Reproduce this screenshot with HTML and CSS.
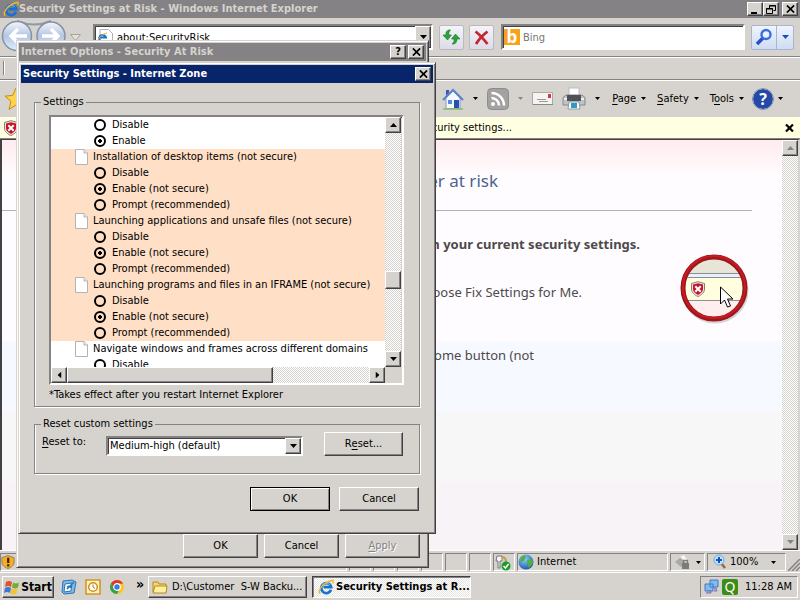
FILE: index.html
```html
<!DOCTYPE html>
<html lang="en">
<head>
<meta charset="utf-8">
<title>Security Settings at Risk - Windows Internet Explorer</title>
<link rel="stylesheet" href="styles.css">
</head>
<body>
<svg class="defs" aria-hidden="true">
  <defs>
    <linearGradient id="orb" x1="0" y1="0" x2="0" y2="1"><stop offset="0" stop-color="#f4f7fc"/><stop offset=".5" stop-color="#b4c5e2"/><stop offset="1" stop-color="#dff1fb"/></linearGradient>
    <radialGradient id="globe" cx=".4" cy=".3" r=".8"><stop offset="0" stop-color="#8fd4ff"/><stop offset="1" stop-color="#0b4aa5"/></radialGradient>
    <symbol id="ie" viewBox="0 0 16 16">
      <path d="M13 10.800A5 5 0 1 1 13.200 8.200H5.500" fill="none" stroke="#1673cf" stroke-width="2.700"/>
      <path d="M4 7a4.600 4.600 0 0 1 8-1" fill="none" stroke="#6ec3f7" stroke-width="1"/>
      <path d="M2.200 14.600C-1 12 5 3.200 14.500 1.200c1.200.3.900 2 .1 3.300" fill="none" stroke="#f2b52a" stroke-width="1.400"/>
    </symbol>
    <symbol id="shield" viewBox="0 0 16 16">
      <path d="M8 .7 14.500 2.500V8c0 3.500-3 6-6.500 7.500C4.500 14 1.500 11.500 1.500 8V2.500z" fill="#f6e9e9" stroke="#877" stroke-width="1"/>
      <path d="M8 2.300 13 3.600V8c0 2.700-2.200 4.700-5 5.900C5.200 12.700 3 10.700 3 8V3.600z" fill="#c41627"/>
      <path d="m5.300 5.200 5.400 5.600m0-5.600-5.400 5.600" stroke="#fff" stroke-width="2"/>
    </symbol>
    <symbol id="down" viewBox="0 0 7 4"><path d="M0 0h7L3.500 4z" fill="currentColor"/></symbol>
    <symbol id="cross" viewBox="0 0 8 7"><path d="m.8.300 6.400 6.400M7.200.3.800 6.700" stroke="currentColor" stroke-width="1.500" fill="none"/></symbol>
    <symbol id="page" viewBox="0 0 13 16"><path d="M.5.500h8.500l3.500 3.500v11.500H.5z" fill="#fff" stroke="#b5b2b5"/><path d="M9 .5V4h3.500" fill="#eee" stroke="#b5b2b5"/></symbol>
  </defs>
</svg>

<main class="browser">
  <header class="titlebar">
    <svg class="i16"><use href="#ie"/></svg>
    <span class="caption">Security Settings at Risk - Windows Internet Explorer</span>
    <div class="pair">
      <button class="cap" aria-label="Minimize"><svg width="10" height="9"><path d="M1 7h6v2H1z"/></svg></button>
      <button class="cap" aria-label="Restore"><svg width="10" height="9"><path d="M3.500 3V.5h6v5H7.500M3 1h7M.5 3.500h6v5h-6zM0 4h7" fill="none" stroke="#000"/></svg></button>
    </div>
    <button class="cap" aria-label="Close"><svg width="9" height="8"><use href="#cross"/></svg></button>
  </header>

  <nav class="navbar">
    <svg class="orbs" width="84" height="36" viewBox="0 0 84 36">
      <path d="M17 2Q34 9 51 2" stroke="#8d98a8" stroke-width="2" fill="none"/>
      <circle cx="17" cy="17" r="14.500" fill="url(#orb)" stroke="#8592a5" stroke-width="1.500"/>
      <circle cx="51" cy="17" r="14" fill="url(#orb)" stroke="#8592a5" stroke-width="1.500"/>
      <path d="M27 17H11m7-7-7 7 7 7M42 17h16m-7-7 7 7-7 7" stroke="#fff" stroke-width="3.500" fill="none"/>
      <path d="M70.500 15.500h10l-5 6z" fill="#e2e0dc" stroke="#a7a5a2"/>
    </svg>
    <div class="address sunken">
      <svg class="i16 pageie" viewBox="0 0 16 16"><path d="M3 .5h8.500l4 4v11H3z" fill="#fff" stroke="#a9b3bd"/><path d="M8.500 11.500A3.500 3.500 0 1 1 9 8.500H3" stroke="#1673cf" stroke-width="2" fill="none"/><path d="M1 13C0 10 5 5 10 4" stroke="#f2b52a" fill="none"/></svg>
      <input aria-label="Address" value="about:SecurityRisk">
      <button class="face drop" aria-label="Show addresses"><svg width="7" height="4"><use href="#down"/></svg></button>
    </div>
    <button class="soft" aria-label="Refresh"><svg width="19" height="18" viewBox="0 0 19 18"><path d="M8.500 2C5 1.500 3.500 4 4 7H1l4.500 5L9.500 7H7C6.500 5 7 3.500 8.500 2z" fill="#2ba336" stroke="#18772a" stroke-width=".6"/><path d="M10 16c3.500.5 5-2 5-5h3l-4.500-5L9.500 11H12c.5 2-.5 4-2 5z" fill="#2ba336" stroke="#18772a" stroke-width=".6"/></svg></button>
    <button class="soft" aria-label="Stop"><svg width="15" height="15" viewBox="0 0 15 15"><path d="M1.500 1.500c4 3 8 7.500 12 12.500M13.500 1.500C9 5 5 9 2 14" stroke="#c3272e" stroke-width="2.800" fill="none"/></svg></button>
    <div class="search sunken">
      <span class="bing">b</span>
      <input aria-label="Search" placeholder="Bing">
    </div>
    <div class="split">
      <button aria-label="Search"><svg width="18" height="18" viewBox="0 0 18 18"><path d="m8 10-6 6" stroke="#2450c8" stroke-width="3.500"/><circle cx="11" cy="6.500" r="4.500" fill="#e9f2ff" stroke="#3a6de0" stroke-width="2.400"/></svg></button>
      <button class="blue" aria-label="Search options"><svg width="7" height="4"><use href="#down"/></svg></button>
    </div>
  </nav>

  <div class="linkbar"><span class="grip"></span></div>

  <div class="cmdbar">
    <svg class="star" width="24" height="24" viewBox="0 0 24 24"><path d="m12 1 3.200 7.400 7.800.7-6 5.300 2 8L12 18l-7 4.400 2-8-6-5.300 7.800-.7z" fill="#ffd34d" stroke="#c98a17"/></svg>
    <div class="tools">
      <button aria-label="Home"><svg width="22" height="22" viewBox="0 0 22 22"><path d="M4 2h3v7H4z" fill="#3c56c7"/><path d="M4 10v10.500h14V10l-7-8z" fill="#f5f8ff" stroke="#7d9bca"/><path d="M1 12 11 2l10 10" stroke="#5b84c4" stroke-width="2.200" fill="none"/><path d="M12 12h5v8h-5z" fill="#2a4fae"/><path d="M6 12h4v4H6z" fill="#5c8bd8"/><path d="M1 21h20" stroke="#8cbb64" stroke-width="1.500"/></svg></button>
      <button class="arr" aria-label="Home options"><svg width="5" height="3"><use href="#down"/></svg></button>
      <button aria-label="Feeds"><svg width="22" height="22" viewBox="0 0 22 22"><rect x=".5" y=".5" width="21" height="21" rx="4" fill="#a3a1a1" stroke="#8e8c8c"/><circle cx="6" cy="16" r="2" fill="#fff"/><path d="M4.500 10a7.500 7.500 0 0 1 7.500 7.500M4.500 5A12.500 12.500 0 0 1 17 17.500" stroke="#fff" stroke-width="2.400" fill="none"/></svg></button>
      <button class="arr dim" aria-label="Feed options"><svg width="5" height="3"><use href="#down"/></svg></button>
      <button aria-label="Read mail"><svg width="22" height="16" viewBox="0 0 22 16"><path d="M.5 1.500h20v12H.5z" fill="#f5f4f2" stroke="#aaa8a5"/><path d="M1 13.500h20" stroke="#8a8886"/><path d="M16 3h3v4h-3z" fill="#cf3745"/><path d="M5 8.500h9M7 10.500h9" stroke="#9a9896"/></svg></button>
      <button aria-label="Print"><svg width="24" height="24" viewBox="0 0 24 24"><path d="M7 1h10v9H7z" fill="#fff" stroke="#bbb"/><path d="M1 10.500 4 8h16l3 2.500V18H1z" fill="#bfc2c7" stroke="#85888d"/><path d="M5 8h14v6H5z" fill="#4d5259"/><path d="M2 11h3v2H2zM19 11h3v2h-3z" fill="#eee"/><path d="M7 15h10l1 7H6z" fill="#fff" stroke="#999"/><path d="M9 16h6v5H9z" fill="#2b9bc2"/></svg></button>
      <button class="arr" aria-label="Print options"><svg width="5" height="3"><use href="#down"/></svg></button>
      <button class="menu"><span><u>P</u>age</span><svg width="5" height="3"><use href="#down"/></svg></button>
      <button class="menu"><span><u>S</u>afety</span><svg width="5" height="3"><use href="#down"/></svg></button>
      <button class="menu"><span>T<u>o</u>ols</span><svg width="5" height="3"><use href="#down"/></svg></button>
      <button class="help" aria-label="Help"><span class="qmark">?</span><svg width="5" height="3"><use href="#down"/></svg></button>
    </div>
  </div>

  <div class="infobar">
    <svg class="i16"><use href="#shield"/></svg>
    <a href="#" class="infotext">your security settings...</a>
    <button aria-label="Dismiss"><svg width="9" height="8" viewBox="0 0 9 8"><path d="m1 .5 7 7m0-7-7 7" stroke="#000" stroke-width="2.200"/></svg></button>
  </div>

  <section class="viewport">
    <article class="doc">
      <h1>computer at risk</h1>
      <hr>
      <div class="advice">
        <div class="lines">
          <p class="strong">on your current security settings.</p>
          <p class="fix">choose Fix Settings for Me.</p>
        </div>
        <svg class="lens" width="70" height="72" viewBox="0 0 70 72">
          <defs><clipPath id="round"><circle cx="35" cy="35" r="30"/></clipPath></defs>
          <circle cx="36" cy="37" r="32" fill="none" stroke="#bbb" stroke-width="3" opacity=".6"/>
          <g clip-path="url(#round)">
            <path d="M0 0h70v21H0z" fill="#e8e4d8"/><path d="M0 21h70v4H0z" fill="#e8f0fa"/><path d="M0 25h70v22H0z" fill="#ffffdf"/><path d="M0 47h70v25H0z" fill="#ffeeee"/>
            <path d="M0 20.500h70M0 24.500h70M0 47.500h70" stroke="#8b8e94"/>
          </g>
          <circle cx="35" cy="35" r="31" fill="none" stroke="#9d171c" stroke-width="5"/>
          <circle cx="35" cy="34" r="31" fill="none" stroke="#c41c22" stroke-width="2"/>
          <use href="#shield" x="11" y="28" width="16" height="16"/>
          <path d="M41.500 34v17l4-4 3 7 3-1-3-7h5.500z" fill="#fff" stroke="#000"/>
        </svg>
      </div>
      <p class="home">Home button (not</p>
    </article>
    <div class="vscroll pagescroll">
      <button class="face up" disabled aria-label="Scroll up"><svg width="7" height="4"><use href="#down"/></svg></button>
      <button class="face" disabled aria-label="Scroll down"><svg width="7" height="4"><use href="#down"/></svg></button>
    </div>
  </section>

  <footer class="status">
    <div class="cell grow"><svg width="14" height="16" viewBox="0 0 16 16"><path d="M8 .7 15 3v5c0 4-3 6-7 7.500C4 14 1 12 1 8V3z" fill="#f4ac24" stroke="#8a7a60"/><path d="M7 3h2.500v6H7zM7 10.500h2.500V13H7z" fill="#402000"/></svg></div>
    <div class="cell"></div><div class="cell"></div><div class="cell"></div><div class="cell"></div><div class="cell"></div><div class="cell"></div>
    <div class="cell"><svg width="17" height="17" viewBox="0 0 17 17"><path d="M3 2h5v5H6v7H4V7H2z" fill="#f5f5f5" stroke="#777"/><path d="M8 3q4 0 4 5" stroke="#c89845" stroke-width="2" fill="none"/><circle cx="12" cy="12" r="4.500" fill="#1c9a2b"/><path d="m9.500 12 2 2 3-4" stroke="#fff" stroke-width="1.500" fill="none"/></svg></div>
    <div class="cell zone"><svg width="16" height="16" viewBox="0 0 16 16"><circle cx="8" cy="8" r="7.500" fill="url(#globe)"/><path d="M3 3q4-3 5 0L6 7 2 8zM9 6l5-1 1 4-4 5-2-4z" fill="#52ae47"/></svg><span>Internet</span></div>
    <div class="cell prot"><svg width="16" height="16" viewBox="0 0 16 16"><path d="m1 8 6-5 6 5-6 5z" fill="#aaa"/><path d="m6 3 4-2 4 6-3 1z" fill="#f6f6f6"/><path d="M8 9h7v6H8z" fill="#7d7b79"/><path d="M9.500 9V6.500h4V9" stroke="#7d7b79" stroke-width="1.300" fill="none"/></svg><svg width="5" height="3"><use href="#down"/></svg></div>
    <div class="cell zoom"><svg width="14" height="16" viewBox="0 0 14 16"><path d="m8 9 4 5" stroke="#9c6843" stroke-width="2.500"/><circle cx="6" cy="6" r="5" fill="#bce0ff" stroke="#78a9d8"/><path d="M6 3v6M3 6h6" stroke="#1455b5" stroke-width="2"/></svg><span>100%</span><svg class="zarr" width="5" height="3"><use href="#down"/></svg></div>
    <svg class="sizer" width="12" height="12"><path d="M0 12 12 0M4 12l8-8M8 12l4-4" stroke="#848284" stroke-width="1.500"/></svg>
  </footer>
</main>

<footer class="taskbar">
  <button class="face start"><svg width="16" height="15" viewBox="0 0 16 15"><path d="M2 2q3-2 6 0L7 7Q4 5 1 7z" fill="#e5502a"/><path d="M9 2.500q3 2 6 0L14 7.500q-3 2-6 0z" fill="#6fae2e"/><path d="M1 8q3-2 6 0l-1 5q-3-2-6 0z" fill="#3b78d8"/><path d="M7.500 8.500q3 2 6 0l-1 5q-3 2-6 0z" fill="#f8c12c"/></svg><span>Start</span></button>
  <div class="quick">
    <button aria-label="Show Desktop"><svg width="16" height="16" viewBox="0 0 16 16"><path d="m2 2 9-1 4 2-2 11-10 1-2-2z" fill="#7fbbe8" stroke="#2b74b8"/><path d="m4 5 7-1-1 8-7 1z" fill="#fff" stroke="#2b74b8"/><path d="M6 10l7-7M6 8q3-2 4 1" stroke="#2b74b8" stroke-width="1.500" fill="none"/></svg></button>
    <button aria-label="Outlook"><svg width="16" height="16" viewBox="0 0 16 16"><path d="M1 1h14v14H1z" fill="#fff2c7" stroke="#d59622" stroke-width="1.600"/><circle cx="8" cy="8" r="4.300" fill="#fff" stroke="#cf8f1e" stroke-width="1.500"/><path d="M8 5.500V8l2 1.500" stroke="#b87612" fill="none"/></svg></button>
    <button aria-label="Chrome"><svg width="16" height="16" viewBox="0 0 16 16"><circle cx="8" cy="8" r="7" fill="#fbc813"/><path d="M1.900 4.500A7 7 0 0 1 14.100 4.600L8 5 5 9.500z" fill="#dd3b2a"/><path d="M1.900 4.500A7 7 0 0 0 8 15l3-5.500-6 0z" fill="#34a04a"/><circle cx="8" cy="8" r="3.300" fill="#3a7be0" stroke="#fff" stroke-width="1.200"/></svg></button>
  </div>
  <span class="more">»</span>
  <button class="face task"><svg width="16" height="14" viewBox="0 0 16 14"><path d="M1 12V2h5l1 2h7v8z" fill="#f6d669" stroke="#b48a1e"/><path d="m1 13 2-7h12l-1 7z" fill="#fff0a0" stroke="#b48a1e"/></svg><span>D:\Customer&nbsp; S-W Backu...</span></button>
  <button class="face task active"><svg class="i16"><use href="#ie"/></svg><span>Security Settings at R...</span></button>
  <div class="tray">
    <svg width="15" height="16" viewBox="0 0 15 16"><path d="M6 1h8v7H6zM1 5h8v7H1z" fill="#76c0f5" stroke="#5470b8"/><path d="M3 12h4v2H2M9 9h3l1 3h-3" fill="#aaa6d0" stroke="#7a7ab0"/></svg>
    <span class="q">Q</span>
    <time>11:28 AM</time>
  </div>
</footer>

<section class="window options" role="dialog" aria-label="Internet Options">
  <header class="titlebar">
    <span class="caption">Internet Options - Security At Risk</span>
    <button class="cap" aria-label="Help"><b>?</b></button>
    <button class="cap" aria-label="Close"><svg width="9" height="8"><use href="#cross"/></svg></button>
  </header>
  <div class="buttons">
    <button class="face btn">OK</button>
    <button class="face btn">Cancel</button>
    <button class="face btn" disabled><u>A</u>pply</button>
  </div>
</section>

<section class="window security" role="dialog" aria-label="Security Settings">
  <header class="titlebar current">
    <span class="caption">Security Settings - Internet Zone</span>
    <button class="cap" aria-label="Close"><svg width="9" height="8"><use href="#cross"/></svg></button>
  </header>
  <form class="body">
    <fieldset class="settings">
      <legend>Settings</legend>
      <div class="list sunken">
        <div class="rows">
          <div class="group">
            <label><input type="radio" name="a">Disable</label>
            <label><input type="radio" name="a" checked>Enable</label>
          </div>
          <div class="group risk">
            <h2><svg><use href="#page"/></svg>Installation of desktop items (not secure)</h2>
            <label><input type="radio" name="b">Disable</label>
            <label><input type="radio" name="b" checked>Enable (not secure)</label>
            <label><input type="radio" name="b">Prompt (recommended)</label>
          </div>
          <div class="group risk">
            <h2><svg><use href="#page"/></svg>Launching applications and unsafe files (not secure)</h2>
            <label><input type="radio" name="c">Disable</label>
            <label><input type="radio" name="c" checked>Enable (not secure)</label>
            <label><input type="radio" name="c">Prompt (recommended)</label>
          </div>
          <div class="group risk">
            <h2><svg><use href="#page"/></svg>Launching programs and files in an IFRAME (not secure)</h2>
            <label><input type="radio" name="d">Disable</label>
            <label><input type="radio" name="d" checked>Enable (not secure)</label>
            <label><input type="radio" name="d">Prompt (recommended)</label>
          </div>
          <div class="group">
            <h2><svg><use href="#page"/></svg>Navigate windows and frames across different domains</h2>
            <label><input type="radio" name="e">Disable</label>
          </div>
        </div>
        <div class="vscroll">
          <button type="button" class="face up" aria-label="Scroll up"><svg width="7" height="4"><use href="#down"/></svg></button>
          <span class="face thumb"></span>
          <button type="button" class="face" aria-label="Scroll down"><svg width="7" height="4"><use href="#down"/></svg></button>
        </div>
        <div class="hscroll">
          <button type="button" class="face left" aria-label="Scroll left"><svg width="7" height="4"><use href="#down"/></svg></button>
          <span class="face thumb"></span>
          <button type="button" class="face right" aria-label="Scroll right"><svg width="7" height="4"><use href="#down"/></svg></button>
        </div>
      </div>
      <p class="note">*Takes effect after you restart Internet Explorer</p>
    </fieldset>
    <fieldset class="reset">
      <legend>Reset custom settings</legend>
      <label for="level"><u>R</u>eset to:</label>
      <div class="combo sunken">
        <select id="level"><option>Medium-high (default)</option></select>
        <span class="face drop"><svg width="7" height="4"><use href="#down"/></svg></span>
      </div>
      <button type="button" class="face btn">R<u>e</u>set...</button>
    </fieldset>
    <div class="buttons">
      <button type="button" class="face btn default">OK</button>
      <button type="button" class="face btn">Cancel</button>
    </div>
  </form>
</section>
</body>
</html>
```
FILE: styles.css
```css
* { box-sizing: border-box; }

:root {
  --face: #d6d3ce;
  --shade: #848284;
  --dark: #424142;
  --ui: "DejaVu Sans Condensed", "DejaVu Sans", sans-serif;
}

body {
  margin: 0;
  height: 100vh;
  display: flex;
  flex-direction: column;
  overflow: hidden;
  background: var(--face);
  color: #000;
  font: 11px/16px var(--ui);
}

.defs { position: absolute; width: 0; height: 0; }
svg { flex: none; }
.i16 { width: 16px; height: 16px; }
h1, h2, p { margin: 0; font-weight: normal; }
button, input, select { font: inherit; color: inherit; margin: 0; padding: 0; border: 0; background: none; }
button { display: flex; align-items: center; justify-content: center; white-space: nowrap; }
u { text-underline-offset: 2px; }

.face {
  background: var(--face);
  border: 1px solid;
  border-color: #fff var(--dark) var(--dark) #fff;
  box-shadow: inset -1px -1px var(--shade);
}
.sunken {
  background: #fff;
  border: 2px solid;
  border-color: var(--shade) #fff #fff var(--shade);
  box-shadow: inset 1px 1px var(--dark);
}

/* title bars */
.titlebar {
  display: flex;
  align-items: center;
  height: 18px;
  padding: 0 2px;
  background: var(--shade);
  color: var(--face);
  font: bold 11px/18px var(--ui);
  white-space: nowrap;
}
.titlebar.current { background: #08246b; color: #fff; }
.caption { flex: 1; }
.pair { display: flex; margin-right: 3px; }
.cap {
  width: 16px;
  height: 14px;
  background: var(--face);
  color: #000;
  border: 1px solid;
  border-color: #fff var(--dark) var(--dark) #fff;
  box-shadow: inset -1px -1px var(--shade);
}

/* browser */
.browser { flex: 1; min-height: 0; display: flex; flex-direction: column; }
.browser > .titlebar { padding-left: 3px; }

.navbar { display: flex; height: 38px; padding: 0 6px 0 0; align-items: center; }
.orbs { margin-right: 9px; }
.address { width: 340px; height: 26px; display: flex; align-items: center; margin-right: 6px; }
.pageie { margin: 0 4px 0 2px; }
.address input, .search input { flex: 1; min-width: 0; height: 20px; outline: none; }
.drop { width: 16px; align-self: stretch; display: flex; align-items: center; justify-content: center; }
.soft {
  width: 25px;
  height: 25px;
  margin-right: 5px;
  border: 1px solid #b9b9c4;
  border-radius: 2px;
  background: linear-gradient(#f5f4fa, #dcdbe8);
}
.search { flex: 1; height: 26px; display: flex; align-items: center; margin: 0 6px 0 2px; padding-left: 1px; }
.search input::placeholder { color: #777; opacity: 1; }
.bing { width: 16px; height: 16px; margin-right: 3px; background: #f9a11b; color: #fff; font: bold 17px/15px "Open Sans", sans-serif; text-align: center; }
.split { display: flex; width: 43px; height: 25px; border: 1px solid #a9b5cf; border-radius: 2px; background: linear-gradient(#f0f4fd, #cfdcf3); }
.split button { flex: 3; }
.split .blue { flex: 2; border-left: 1px solid #a9b5cf; color: #1a4fc0; }

.linkbar { height: 24px; padding: 4px 3px; border: solid var(--shade); border-width: 1px 0; box-shadow: inset 0 1px #fff, 0 1px #fff; }
.grip { display: block; width: 2px; height: 14px; border-left: 1px solid var(--shade); background: #fff; }

.cmdbar { display: flex; align-items: center; justify-content: space-between; height: 37px; padding: 0 17px 0 0; }
.star { margin-left: 4px; }
.tools { display: flex; align-items: center; gap: 8px; }
.arr { width: 7px; }
.dim { color: #8a8886; }
.menu { gap: 5px; margin-left: 3px; }
.help { gap: 4px; }
.qmark { width: 22px; height: 22px; border-radius: 50%; background: #2449a6; border: 1px solid #fff; outline: 1px solid #7c8cab; outline-offset: -1px; color: #fff; font: bold 16px/20px "Noto Sans", sans-serif; }

.infobar { display: flex; align-items: center; height: 22px; padding: 0 6px 0 3px; background: #ffffe1; border-bottom: 1px solid var(--shade); }
.infotext { width: 493px; text-align: right; color: #000; text-decoration: none; }
.infobar button { margin-left: auto; }

.viewport { flex: 1; min-height: 0; display: flex; border: 1px solid var(--dark); border-width: 1px 2px 0 2px; border-right-color: var(--face); }
.doc {
  flex: 1;
  padding: 29px 30px 0 0;
  background: linear-gradient(#ffecee, #fffcff 36px, #fffcff 200px, #f6f9ff 202px, #f6f9ff 270px, #f7f7f7 273px, #f7f7f7 340px, #f7f3f7 343px, #f7f3f7);
  color: #4c4a4d;
  font: 13px/20px "Noto Sans", sans-serif;
}
.doc h1 { width: 496px; text-align: right; color: #4b638f; font: 17px/24px "Noto Sans", sans-serif; }
.doc hr { height: 1px; margin: 17px 0 0; border: 0; background: #b3b0b5; }
.advice { display: flex; justify-content: space-between; padding-top: 23px; }
.strong { width: 638px; text-align: right; font: bold 13px/20px "Noto Sans", sans-serif; }
.fix { width: 580px; margin-top: 28px; text-align: right; }
.lens { margin: 19px 3px 0 0; }
.home { width: 532px; text-align: right; margin-top: 20px; }

.vscroll, .hscroll { display: flex; justify-content: space-between; background: repeating-conic-gradient(#fff 0 25%, var(--face) 0 50%) 0 0 / 2px 2px; }
.vscroll { flex-direction: column; width: 16px; }
.vscroll button, .hscroll button { width: 16px; height: 16px; }
.vscroll button:disabled { color: var(--shade); }
.up svg { transform: rotate(180deg); }
.left svg { transform: rotate(90deg); }
.right svg { transform: rotate(-90deg); }

.status { display: flex; height: 22px; padding: 2px 0 1px; gap: 2px; border-top: 1px solid #fff; }
.cell { width: 22px; display: flex; align-items: center; border: 1px solid; border-color: var(--shade) #fff #fff var(--shade); }
.cell.grow { flex: 1; }
.zone { width: 151px; gap: 3px; }
.prot { width: 35px; gap: 6px; padding-left: 3px; }
.zoom { width: 79px; gap: 3px; padding-left: 5px; }
.zarr { margin-left: 10px; }
.sizer { align-self: flex-end; }

/* task bar */
.taskbar { display: flex; align-items: center; height: 28px; padding: 1px 2px 0; border-top: 1px solid #fff; }
.start { width: 52px; height: 22px; gap: 1px; font: bold 12px/16px var(--ui); }
.quick { display: flex; gap: 8px; margin-left: 7px; }
.more { margin-left: 11px; width: 12px; font: bold 14px/16px var(--ui); padding-bottom: 6px; }
.task { width: 159px; height: 22px; margin-right: 5px; padding-left: 3px; gap: 4px; justify-content: flex-start; }
.task.active {
  border-color: var(--dark) #fff #fff var(--dark);
  box-shadow: inset 1px 1px var(--shade);
  background: repeating-conic-gradient(#fff 0 25%, #e6e4e1 0 50%) 0 0 / 2px 2px;
  padding-left: 5px;
  gap: 2px;
  font: bold 11px/16px var(--ui);
}
.tray { display: flex; align-items: center; gap: 3px; width: 98px; height: 22px; margin-left: auto; padding-left: 3px; border: 1px solid; border-color: var(--shade) #fff #fff var(--shade); }
.q { width: 16px; height: 16px; border-radius: 2px; background: #3c8c16; color: #fff; font: 14px/16px "Noto Sans", sans-serif; text-align: center; }
.tray time { margin-left: 4px; white-space: nowrap; }

/* dialogs */
.window {
  position: absolute;
  display: flex;
  flex-direction: column;
  padding: 2px;
  background: var(--face);
  border: 1px solid;
  border-color: var(--face) var(--dark) var(--dark) var(--face);
  box-shadow: inset 1px 1px #fff, inset -1px -1px var(--shade);
}
.options { left: 16px; top: 40px; width: 413px; height: 528px; }
.options > .buttons { margin-top: auto; padding: 0 6px 7px; gap: 6px; }
.options .btn { width: 75px; }
.security { left: 18px; top: 62px; width: 418px; }
.buttons { display: flex; justify-content: flex-end; }
.btn { width: 80px; height: 24px; }
.btn:disabled { color: var(--shade); text-shadow: 1px 1px #fff; }
.btn.default { outline: 1px solid #000; outline-offset: -1px; border-color: #000; box-shadow: inset 1px 1px #fff, inset -1px -1px var(--shade); }
.window .titlebar { padding: 0 2px; gap: 2px; }

.body { padding: 11px 13px 20px; }
fieldset { margin: 0; padding: 0; min-width: 0; border: 1px solid var(--shade); box-shadow: 1px 1px #fff, inset 1px 0 #fff; }
legend { margin-left: -1px; padding: 0 2px; line-height: 16px; }
.settings { padding: 5px 15px 3px 14px; }
.settings legend { margin-left: -8px; }
.list { display: grid; grid-template-columns: 1fr 16px; grid-template-rows: 250px 16px; padding-right: 1px; background: var(--face); }
.list .vscroll { justify-content: flex-start; }
.list .vscroll .thumb { height: 18px; margin: 138px 0 auto; }
.rows { overflow: hidden; background: #fff; white-space: nowrap; }
.group h2, .group label { display: flex; align-items: center; height: 16px; font-size: 11px; }
.group h2 { gap: 5px; padding-left: 24px; }
.group h2 svg { width: 13px; height: 16px; }
.group label { gap: 6px; padding-left: 43px; }
.risk { background: #ffdfc6; }
input[type="radio"] {
  appearance: none;
  width: 12px;
  height: 12px;
  border: 2px solid #000;
  border-radius: 50%;
}
input[type="radio"]:checked { background: radial-gradient(circle, #000 0 2px, transparent 2px); }
.hscroll { justify-content: flex-start; }
.hscroll .thumb { width: 206px; margin-right: auto; }
.note { margin-top: 2px; }

.reset { display: flex; padding: 0 16px 17px 7px; margin-top: 9px; }
.reset > label { width: 64px; padding-top: 2px; }
.combo { display: flex; width: 197px; height: 20px; margin-top: 4px; position: relative; }
.combo select { flex: 1; appearance: none; padding: 0 2px; outline: none; }
.combo .drop { pointer-events: none; }
.reset .btn { width: 79px; margin-left: auto; }
.body > .buttons { gap: 9px; margin-top: 13px; padding-right: 1px; }
```
